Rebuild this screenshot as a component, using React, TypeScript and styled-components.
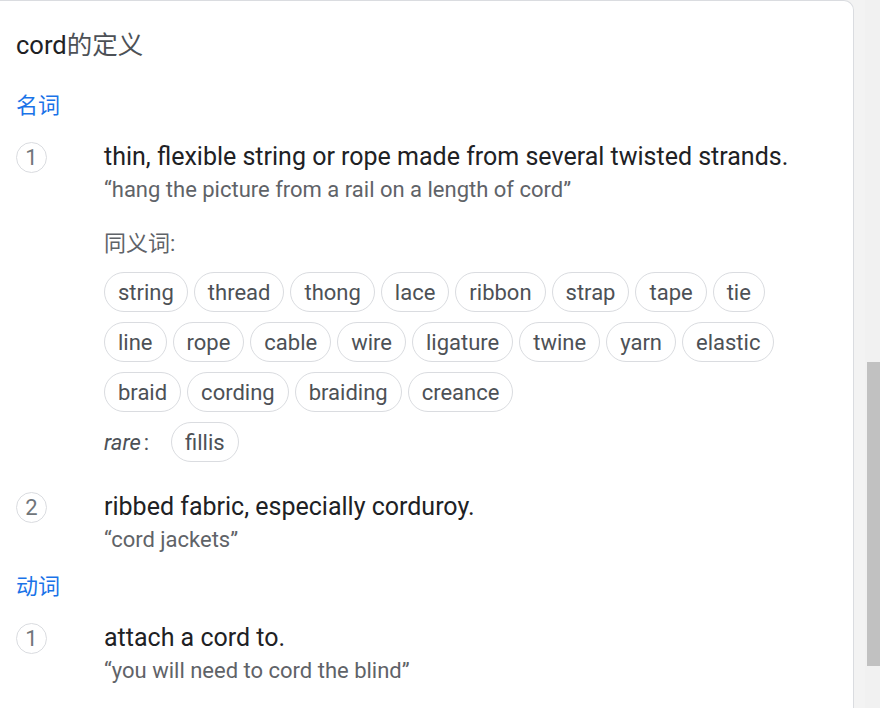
import React from "react";
import styled, { createGlobalStyle } from "styled-components";

const GlobalStyle = createGlobalStyle`
  html, body { margin: 0; padding: 0; background: #f3f3f3; }
  body { font-family: Roboto, "Noto Sans CJK SC", sans-serif; }
`;

const Page = styled.div`
  display: flex;
  width: 880px;
  height: 708px;
  overflow: hidden;
  background: #f3f3f3;
`;

const Main = styled.div`
  flex: 1;
  min-width: 0;
`;

const Card = styled.div`
  width: 854px;
  height: 720px;
  box-sizing: border-box;
  background: #fff;
  border-top: 1px solid #dadce0;
  border-right: 1px solid #dadce0;
  border-top-right-radius: 10px;
  padding-left: 16px;
`;

const Scrollbar = styled.div`
  width: 15px;
  background: #f1f1f1;
  display: flex;
  flex-direction: column;
  padding-top: 362px;
  box-sizing: border-box;
`;

const Thumb = styled.div`
  margin-left: 2px;
  width: 13px;
  height: 304px;
  background: #c1c1c1;
`;

const Header = styled.div`
  padding-top: 30px;
  font-size: 25.5px;
  line-height: 28px;
  color: #202124;
`;

const HeaderCjk = styled.span`
  color: #4d5156;
`;

const Pos = styled.div<{ $gap: number }>`
  margin-top: ${(p) => p.$gap}px;
  font-size: 22px;
  line-height: 28px;
  color: #1a73e8;
`;

const Sense = styled.div<{ $gap: number }>`
  display: grid;
  grid-template-columns: 88px 1fr;
  margin-top: ${(p) => p.$gap}px;
`;

const Num = styled.div`
  width: 31px;
  height: 31px;
  box-sizing: border-box;
  border: 1px solid #dadce0;
  border-radius: 50%;
  display: flex;
  align-items: center;
  justify-content: center;
  font-size: 22px;
  color: #70757a;
`;

const Body = styled.div``;

const Def = styled.div`
  font-size: 25px;
  line-height: 30px;
  color: #202124;
`;

const Example = styled.div`
  margin-top: 5px;
  font-size: 22px;
  line-height: 26px;
  color: #5f6368;
`;

const SynLabel = styled.div`
  margin-top: 29px;
  font-size: 22px;
  line-height: 24px;
  color: #5f6368;
`;

const Chips = styled.div`
  display: flex;
  flex-wrap: wrap;
  gap: 10px 6px;
  margin-top: 16px;
  max-width: 700px;
`;

const Chip = styled.span`
  box-sizing: border-box;
  height: 40px;
  padding: 0 13px;
  border: 1px solid #dadce0;
  border-radius: 20px;
  display: inline-flex;
  align-items: center;
  font-size: 22px;
  color: #4d5156;
`;

const RareRow = styled.div`
  display: flex;
  align-items: center;
  gap: 22px;
  margin-top: 10px;
`;

const Rare = styled.span`
  font-size: 22px;
  color: #4d5156;
  & > i { padding-right: 3px; }
`;

const syn1 = [
  "string", "thread", "thong", "lace", "ribbon", "strap", "tape", "tie",
  "line", "rope", "cable", "wire", "ligature", "twine", "yarn", "elastic",
  "braid", "cording", "braiding", "creance",
];

export default function App() {
  return (
    <>
      <GlobalStyle />
      <Page>
        <Main>
          <Card>
            <Header>cord<HeaderCjk>的定义</HeaderCjk></Header>
            <Pos $gap={33}>名词</Pos>
            <Sense $gap={22}>
              <Num>1</Num>
              <Body>
                <Def>thin, flexible string or rope made from several twisted strands.</Def>
                <Example>“hang the picture from a rail on a length of cord”</Example>
                <SynLabel>同义词:</SynLabel>
                <Chips>
                  {syn1.map((s) => (
                    <Chip key={s}>{s}</Chip>
                  ))}
                </Chips>
                <RareRow>
                  <Rare><i>rare</i>:</Rare>
                  <Chip>fillis</Chip>
                </RareRow>
              </Body>
            </Sense>
            <Sense $gap={30}>
              <Num>2</Num>
              <Body>
                <Def>ribbed fabric, especially corduroy.</Def>
                <Example>“cord jackets”</Example>
              </Body>
            </Sense>
            <Pos $gap={20}>动词</Pos>
            <Sense $gap={22}>
              <Num>1</Num>
              <Body>
                <Def>attach a cord to.</Def>
                <Example>“you will need to cord the blind”</Example>
              </Body>
            </Sense>
          </Card>
        </Main>
        <Scrollbar>
          <Thumb />
        </Scrollbar>
      </Page>
    </>
  );
}
